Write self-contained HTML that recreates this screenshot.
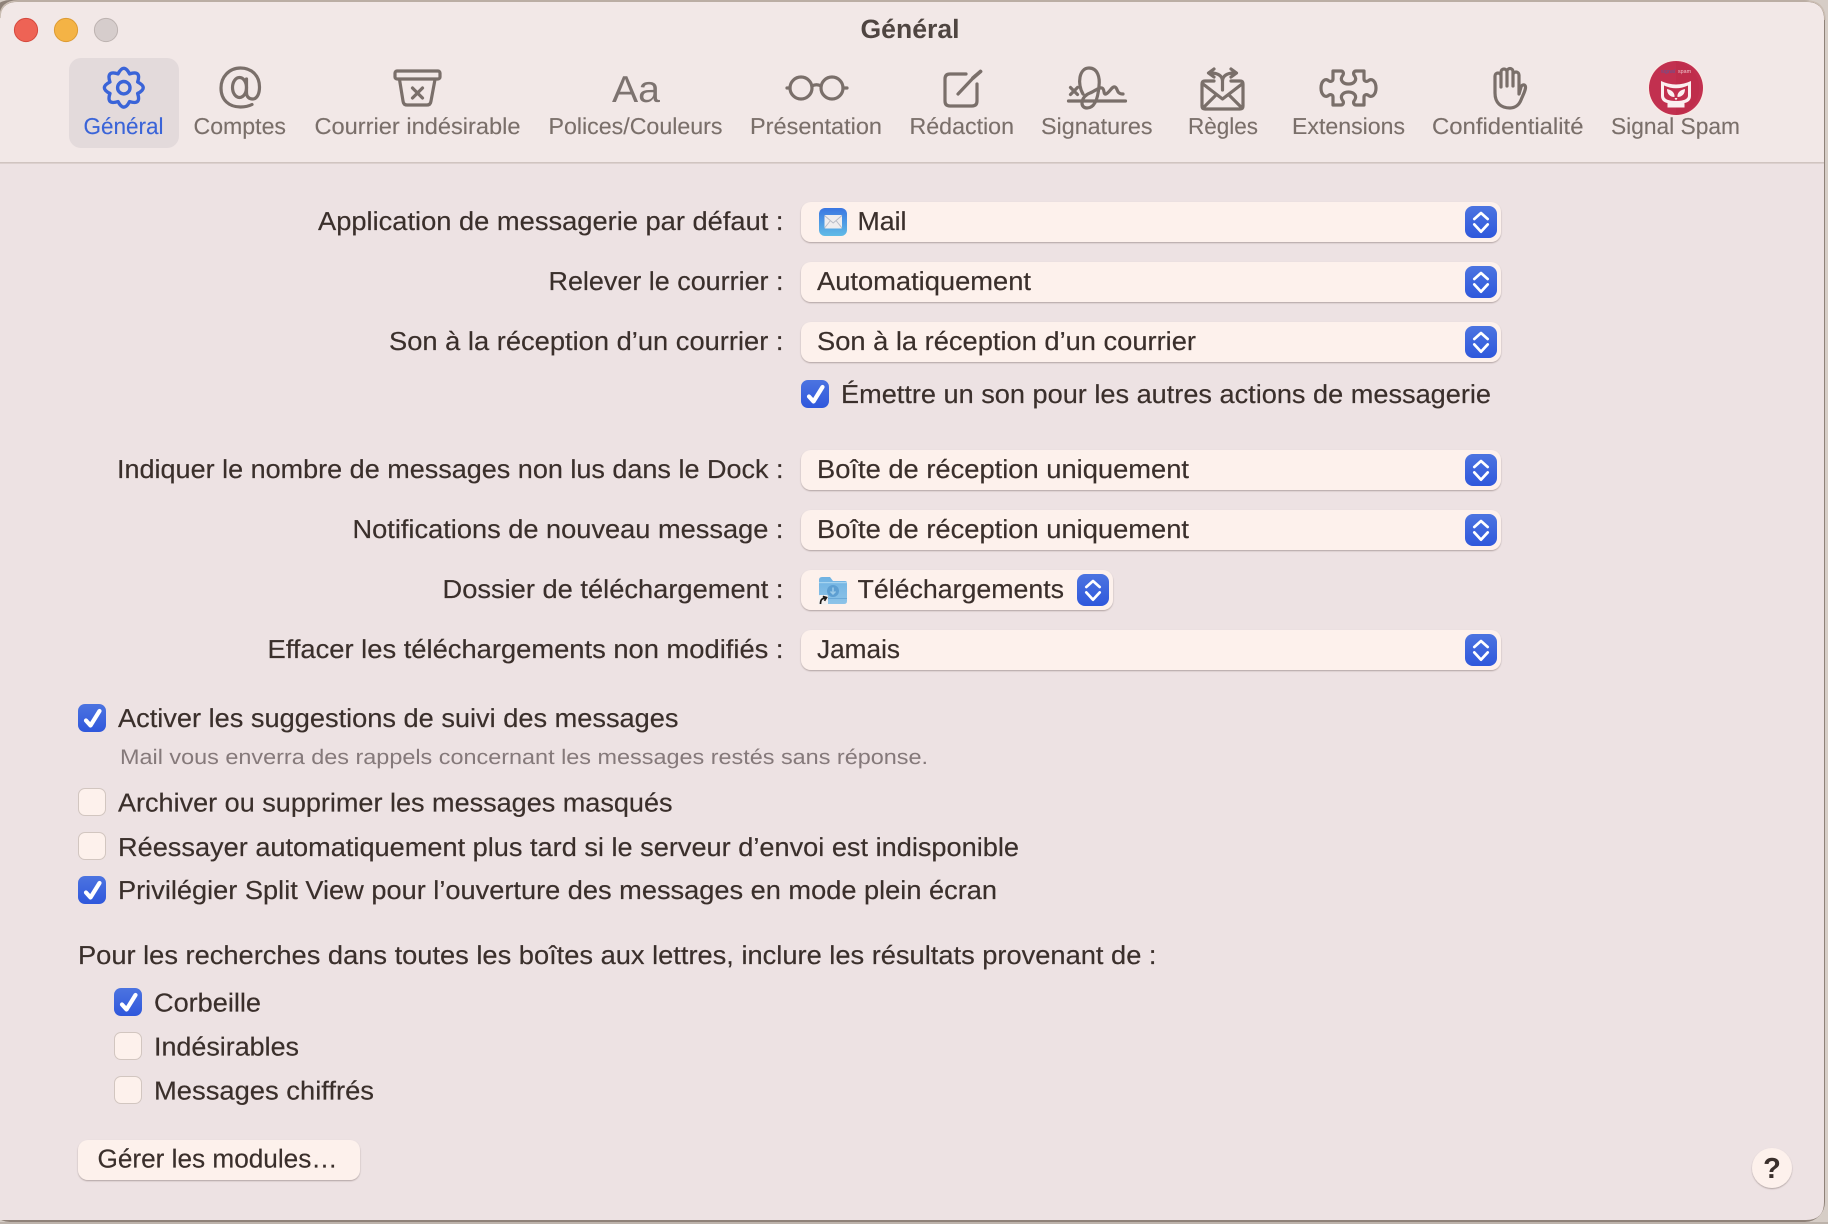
<!DOCTYPE html>
<html lang="fr"><head><meta charset="utf-8"><title>Général</title>
<style>
html,body{margin:0;padding:0;width:1828px;height:1224px;overflow:hidden;background:#d6cdc6}
svg{display:block;position:absolute;left:0;top:0}
text{font-family:"Liberation Sans",sans-serif;text-rendering:geometricPrecision}
.l{font-size:26px;fill:#3a2f2b;stroke:#3a2f2b;stroke-width:.18}
.s{font-size:21px;fill:#85797a}
.t{font-size:23px;fill:#7a6f6a;stroke:#7a6f6a;stroke-width:.12}
.i{fill:none;stroke:#7a6f6a;stroke-width:3.2;stroke-linecap:round;stroke-linejoin:round}
</style></head><body>
<svg width="1828" height="1224" viewBox="0 0 1828 1224" xmlns="http://www.w3.org/2000/svg">
<defs>
<linearGradient id="b" x1="0" y1="0" x2="0" y2="1"><stop offset="0" stop-color="#4c74e0"/><stop offset="1" stop-color="#2f58dc"/></linearGradient>
<linearGradient id="m" x1="0" y1="0" x2="0" y2="1"><stop offset="0" stop-color="#3b77e2"/><stop offset="1" stop-color="#60bbe6"/></linearGradient>
<linearGradient id="f" x1="0" y1="0" x2="0" y2="1"><stop offset="0" stop-color="#6fb2e2"/><stop offset="1" stop-color="#8cc3e8"/></linearGradient>
<filter id="sh" x="-5%" y="-20%" width="110%" height="150%"><feDropShadow dx="0" dy="1" stdDeviation="0.9" flood-color="#5a4a42" flood-opacity=".42"/></filter>
<g id="stp"><rect width="32" height="32" rx="8" fill="url(#b)"/><path d="M9.3 13.3 16 7.3 22.7 13.3M9.3 18.7 16 26 22.7 18.7" fill="none" stroke="#fff" stroke-width="2.7" stroke-linecap="round" stroke-linejoin="round" transform="translate(0 -.3)"/></g>
<g id="on"><rect width="28" height="28" rx="7" fill="url(#b)"/><path d="M8 16.5 12.5 21.500 21.500 7" fill="none" stroke="#fff" stroke-width="4.2" stroke-linecap="round" stroke-linejoin="round"/></g>
<rect id="off" width="27" height="27" x=".5" y=".5" rx="6.5" fill="#fdf1ec" stroke="#d2c6c0"/>
</defs>

<!-- window -->
<rect x="0" y="1222" width="1828" height="2" fill="#bdb3ab"/>
<rect x="-10" y="0" width="1835" height="1222" rx="20" fill="#8f8279"/>
<path d="M0 20Q0 2 18 2H1806Q1824 2 1824 20V1202Q1824 1220 1806 1220H0Z" fill="#ede2e3"/>
<path d="M0 20Q0 2 18 2H1806Q1824 2 1824 20V162H0Z" fill="#f2e8e7"/>
<rect x="0" y="162" width="1824" height="1.6" fill="#d0c4c0"/>
<path d="M0 18Q0 1 18 1H1806Q1825 1 1825 20" fill="none" stroke="#cabdb2" stroke-width="1.4"/>

<!-- traffic lights -->
<circle cx="26" cy="30" r="11.6" fill="#ee6355" stroke="#d5493e"/>
<circle cx="66" cy="30" r="11.6" fill="#f4b345" stroke="#dd9b33"/>
<circle cx="106" cy="30" r="11.6" fill="#d6cdcc" stroke="#bdb3b1"/>
<text x="860.500" y="38" textLength="99" lengthAdjust="spacingAndGlyphs" font-size="26.500" font-weight="700" fill="#4f4541">Général</text>

<!-- toolbar -->
<rect x="69" y="58" width="110" height="90" rx="12" fill="#e3dadb"/>
<g transform="translate(123.8 87.7)" fill="none" stroke="#3a64d8" stroke-width="3.4" stroke-linejoin="round">
<path d="M-5.74-13.86Q0-25 5.74-13.86Q17.68-17.68 13.86-5.74Q25 0 13.86 5.74Q17.68 17.68 5.74 13.86Q0 25-5.74 13.86Q-17.68 17.68-13.86 5.74Q-25 0-13.86-5.74Q-17.68-17.68-5.74-13.86Z"/>
<circle r="6.2"/></g>
<path class="i" d="M246.500 79V93C246.500 97 249.500 99 252.500 99C257.500 99 259.500 93 259.500 87C259.500 76 252 68 240.500 68C229 68 221 77 221 88C221 100 229 107 240.500 107C245 107 249 106 252 104.500"/>
<ellipse class="i" cx="239.500" cy="87.500" rx="7" ry="10"/>
<rect class="i" x="395" y="71" width="45" height="8" rx="2"/>
<path class="i" d="M399.500 79.500 403 101Q403.500 105 407 105H427Q430.500 105 431 101L435 79.500M412.500 88 422.500 98M422.500 88 412.500 98"/>
<text x="612" y="102" textLength="48" lengthAdjust="spacingAndGlyphs" font-size="37.500" fill="#7d7370">Aa</text>
<circle class="i" cx="801" cy="88" r="11"/><circle class="i" cx="832" cy="88" r="11"/>
<path class="i" d="M812 86Q816.500 83.500 821 86M787 88H790M843 88H847"/>
<path class="i" d="M966 74H950Q945 74 945 79V101Q945 106 950 106H972Q977 106 977 101V84M958 94 975 76"/>
<path d="M973 78 980.500 71.500" fill="none" stroke="#7a6f6a" stroke-width="3.8" stroke-linecap="round"/>
<path class="i" d="M1068.500 101H1125.500M1070.500 87.500 1077.500 94.500M1077.500 87.500 1070.500 94.500M1083 94C1077 84 1079 68 1089 68C1098 68 1100 78 1099 86C1098 98 1095 108 1087 108C1079 108 1081 96 1090 93C1095 91 1099 87 1102 88C1105 89 1103 95 1106 94C1110 92 1112 86 1115 87C1118 88 1116 94 1123 94"/>
<path class="i" d="M1214 81H1205Q1202 81 1202 84V106Q1202 109 1205 109H1240Q1243 109 1243 106V84Q1243 81 1240 81H1231M1203 84 1222.500 99 1242 84M1204 107 1216 95M1241 107 1229 95M1222.500 90V81C1222.500 76 1218 73 1211 73M1222.500 81C1222.500 76 1227 73 1234 73M1214 69 1208.500 73 1214 77M1231 69 1236.500 73 1231 77"/>
<path class="i" d="M1333 71H1341C1343 71 1344 73 1343 75C1339 80 1343 84 1348.500 84C1354 84 1358 80 1354 75C1353 73 1354 71 1356 71H1364V79C1364 81 1366 82 1368 81C1372 77 1376 82 1376 88C1376 94 1372 99 1368 95C1366 94 1364 95 1364 97V105H1356C1354 105 1353 103 1354 101C1358 96 1354 92 1348.500 92C1343 92 1339 96 1343 101C1344 103 1343 105 1341 105H1333V97C1333 95 1331 94 1329 95C1325 99 1321 94 1321 88C1321 82 1325 77 1329 81C1331 82 1333 81 1333 79Z"/>
<path class="i" d="M1495 93V76A3 3 0 0 1 1501 76V72A3 3 0 0 1 1507 72V71.500A3 3 0 0 1 1513 71.500V75A3 3 0 0 1 1519 75V94L1521 87C1522 84 1526 84 1525.500 88C1525 92 1522 97 1521 100C1519 105 1515 108 1510 108C1501 108 1495 103 1495 93ZM1501 76V87M1507 72V86M1513 72V86"/>
<circle cx="1676" cy="88" r="28.500" fill="#f8e9e4"/><circle cx="1676" cy="88" r="27" fill="#c2304f"/>
<path d="M1676 61.500A27 27 0 0 1 1676 115Z" fill="#bb2a48" opacity=".5"/>
<path d="M1661 81Q1676 88 1691 81V96C1691 100 1688 102.500 1684.500 103V107.500H1667.500V103C1664 102.500 1661 100 1661 96Z" fill="#fbeff0"/>
<path d="M1664 85.500Q1676 91 1688 85.500V95.500C1688 99 1684 101 1676 101C1668 101 1664 99 1664 95.500Z" fill="#c2304f"/>
<path d="M1667 89C1672 90 1675 93 1674.500 97C1670 97 1667 94 1667 89ZM1685 89C1680 90 1677 93 1677.500 97C1682 97 1685 94 1685 89ZM1674.500 98H1677.500L1676 100.500Z" fill="#fbeff0"/>
<text x="1661" y="73" font-size="5.500" fill="#5a5a9a" textLength="14" lengthAdjust="spacingAndGlyphs">signal</text>
<text x="1678" y="73" font-size="5.500" fill="#ecc6cc" textLength="13" lengthAdjust="spacingAndGlyphs">spam</text>

<text class="t" style="fill:#3a64d8;stroke:#3a64d8" x="83.500" y="134" textLength="80" lengthAdjust="spacingAndGlyphs">Général</text>
<text class="t" x="193.500" y="134" textLength="92.500" lengthAdjust="spacingAndGlyphs">Comptes</text>
<text class="t" x="314.500" y="134" textLength="206" lengthAdjust="spacingAndGlyphs">Courrier indésirable</text>
<text class="t" x="548.500" y="134" textLength="174" lengthAdjust="spacingAndGlyphs">Polices/Couleurs</text>
<text class="t" x="750" y="134" textLength="132" lengthAdjust="spacingAndGlyphs">Présentation</text>
<text class="t" x="909.500" y="134" textLength="104.500" lengthAdjust="spacingAndGlyphs">Rédaction</text>
<text class="t" x="1041" y="134" textLength="111.500" lengthAdjust="spacingAndGlyphs">Signatures</text>
<text class="t" x="1188" y="134" textLength="70" lengthAdjust="spacingAndGlyphs">Règles</text>
<text class="t" x="1292" y="134" textLength="113" lengthAdjust="spacingAndGlyphs">Extensions</text>
<text class="t" x="1432" y="134" textLength="151.500" lengthAdjust="spacingAndGlyphs">Confidentialité</text>
<text class="t" x="1611" y="134" textLength="129" lengthAdjust="spacingAndGlyphs">Signal Spam</text>

<!-- form labels -->
<text class="l" x="318" y="230" textLength="465.500" lengthAdjust="spacingAndGlyphs">Application de messagerie par défaut :</text>
<text class="l" x="548.500" y="290" textLength="235" lengthAdjust="spacingAndGlyphs">Relever le courrier :</text>
<text class="l" x="389" y="350" textLength="394.500" lengthAdjust="spacingAndGlyphs">Son à la réception d’un courrier :</text>
<text class="l" x="117" y="478" textLength="666.500" lengthAdjust="spacingAndGlyphs">Indiquer le nombre de messages non lus dans le Dock :</text>
<text class="l" x="352.500" y="538" textLength="431" lengthAdjust="spacingAndGlyphs">Notifications de nouveau message :</text>
<text class="l" x="442.500" y="598" textLength="341" lengthAdjust="spacingAndGlyphs">Dossier de téléchargement :</text>
<text class="l" x="267.500" y="658" textLength="516" lengthAdjust="spacingAndGlyphs">Effacer les téléchargements non modifiés :</text>

<!-- popups -->
<g fill="#fdf1ec" filter="url(#sh)">
<rect x="801" y="202" width="700" height="40" rx="10"/>
<rect x="801" y="262" width="700" height="40" rx="10"/>
<rect x="801" y="322" width="700" height="40" rx="10"/>
<rect x="801" y="450" width="700" height="40" rx="10"/>
<rect x="801" y="510" width="700" height="40" rx="10"/>
<rect x="801" y="570" width="312" height="40" rx="10"/>
<rect x="801" y="630" width="700" height="40" rx="10"/>
<rect x="78" y="1140" width="282" height="40" rx="10"/>
<circle cx="1772" cy="1168" r="20"/>
</g>
<use href="#stp" x="1465" y="206"/><use href="#stp" x="1465" y="266"/><use href="#stp" x="1465" y="326"/>
<use href="#stp" x="1465" y="454"/><use href="#stp" x="1465" y="514"/><use href="#stp" x="1077" y="574"/><use href="#stp" x="1465" y="634"/>

<!-- mail icon -->
<rect x="819" y="208" width="28" height="28" rx="6" fill="url(#m)"/>
<rect x="824.500" y="215" width="17.500" height="13.500" rx="1" fill="#efedee"/>
<path d="M824.500 215.500 833.200 223 842 215.500M824.500 228 830.500 220.500M842 228 836 220.500" fill="none" stroke="#b9bcc6" stroke-width="1"/>
<text class="l" x="857.500" y="230" textLength="49" lengthAdjust="spacingAndGlyphs">Mail</text>
<text class="l" x="817" y="290" textLength="214" lengthAdjust="spacingAndGlyphs">Automatiquement</text>
<text class="l" x="817" y="350" textLength="379" lengthAdjust="spacingAndGlyphs">Son à la réception d’un courrier</text>
<use href="#on" x="801" y="380"/>
<text class="l" x="841" y="403" textLength="650" lengthAdjust="spacingAndGlyphs">Émettre un son pour les autres actions de messagerie</text>
<text class="l" x="817" y="478" textLength="372" lengthAdjust="spacingAndGlyphs">Boîte de réception uniquement</text>
<text class="l" x="817" y="538" textLength="372" lengthAdjust="spacingAndGlyphs">Boîte de réception uniquement</text>
<!-- folder icon -->
<path d="M819 580Q819 577 822 577H830L833 581H845Q847 581 847 583V601Q847 604 844 604H822Q819 604 819 601Z" fill="url(#f)"/>
<rect x="819" y="582" width="28" height="1.200" fill="#a6d4f0"/>
<rect x="819" y="598" width="28" height="1" fill="#6aa9d8"/>
<circle cx="833" cy="591" r="6" fill="#5d9fd2"/>
<path d="M833 587.500V593.500M830.500 591.500 833 594 835.500 591.500" fill="none" stroke="#9ccbe9" stroke-width="1.500"/>
<rect x="818.500" y="595" width="9.500" height="10" rx="1.500" fill="#f4f1f0"/>
<path d="M820.500 604C820.500 600 821.500 598.500 825.500 598M822.800 596.500 826.500 597.500 824.500 600.800" fill="none" stroke="#1e1b1a" stroke-width="1.700"/>
<text class="l" x="857.500" y="598" textLength="206.500" lengthAdjust="spacingAndGlyphs">Téléchargements</text>
<text class="l" x="817" y="658" textLength="83" lengthAdjust="spacingAndGlyphs">Jamais</text>

<!-- checkboxes -->
<use href="#on" x="78" y="704"/>
<text class="l" x="118" y="727" textLength="560.500" lengthAdjust="spacingAndGlyphs">Activer les suggestions de suivi des messages</text>
<text class="s" x="120" y="764" textLength="808" lengthAdjust="spacingAndGlyphs">Mail vous enverra des rappels concernant les messages restés sans réponse.</text>
<use href="#off" x="78" y="788"/>
<text class="l" x="118" y="811.500" textLength="554.500" lengthAdjust="spacingAndGlyphs">Archiver ou supprimer les messages masqués</text>
<use href="#off" x="78" y="832"/>
<text class="l" x="118" y="856" textLength="901" lengthAdjust="spacingAndGlyphs">Réessayer automatiquement plus tard si le serveur d’envoi est indisponible</text>
<use href="#on" x="78" y="876"/>
<text class="l" x="118" y="899" textLength="879" lengthAdjust="spacingAndGlyphs">Privilégier Split View pour l’ouverture des messages en mode plein écran</text>
<text class="l" x="78" y="964" textLength="1078.500" lengthAdjust="spacingAndGlyphs">Pour les recherches dans toutes les boîtes aux lettres, inclure les résultats provenant de :</text>
<use href="#on" x="114" y="988"/>
<text class="l" x="154" y="1011.500" textLength="107" lengthAdjust="spacingAndGlyphs">Corbeille</text>
<use href="#off" x="114" y="1032"/>
<text class="l" x="154" y="1055.500" textLength="145" lengthAdjust="spacingAndGlyphs">Indésirables</text>
<use href="#off" x="114" y="1076"/>
<text class="l" x="154" y="1099.500" textLength="220" lengthAdjust="spacingAndGlyphs">Messages chiffrés</text>
<text class="l" x="97.500" y="1167.500" textLength="240" lengthAdjust="spacingAndGlyphs">Gérer les modules…</text>
<text x="1772" y="1178" text-anchor="middle" font-size="29" font-weight="700" fill="#3a2f2b">?</text>
</svg>
</body></html>
